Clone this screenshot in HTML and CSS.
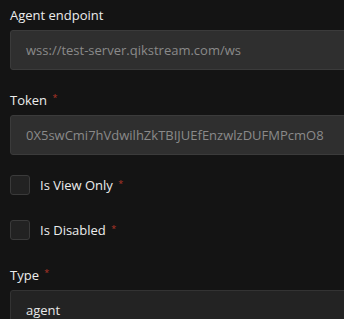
FILE: index.html
```html
<!DOCTYPE html>
<html>
<head>
<meta charset="utf-8">
<link rel="stylesheet" href="styles.css">
</head>
<body>
<form class="form">
  <div class="group">
    <label class="label">Agent endpoint</label>
    <div class="input input-disabled">wss://test-server.qikstream.com/ws</div>
  </div>
  <div class="group">
    <label class="label">Token <span class="req">*</span></label>
    <div class="input input-disabled">0X5swCmi7hVdwilhZkTBIJUEfEnzwlzDUFMPcmO8</div>
  </div>
  <div class="check-row">
    <span class="checkbox"></span>
    <span class="check-label">Is View Only <span class="req">*</span></span>
  </div>
  <div class="check-row">
    <span class="checkbox"></span>
    <span class="check-label">Is Disabled <span class="req">*</span></span>
  </div>
  <div class="group">
    <label class="label">Type <span class="req">*</span></label>
    <div class="input input-select">agent</div>
  </div>
</form>
</body>
</html>
```

FILE: styles.css
```css
html, body {
  margin: 0;
  padding: 0;
  background: #141414;
  overflow: hidden;
}
.form {
  display: flex;
  flex-direction: column;
  padding: 5px 0 0 10px;
  width: 400px;
  font-family: "Open Sans", "Noto Sans", sans-serif;
  color: #e8e8e8;
}
.group {
  display: flex;
  flex-direction: column;
  margin-bottom: 20px;
}
.label {
  font-size: 13px;
  line-height: 20px;
  margin-bottom: 5px;
  color: #ececec;
}
.req {
  color: #b03428;
  font-size: 9px;
  vertical-align: top;
  position: relative;
  top: -2px;
  margin-left: 2px;
}
.input {
  height: 40px;
  box-sizing: border-box;
  border: 1px solid #3b3b3b;
  border-radius: 3px;
  padding: 0 15px;
  display: flex;
  align-items: center;
  font-size: 13px;
}
.input-disabled {
  background: #2f2f2f;
  color: #8a8a8a;
}
.input-select {
  background: #232323;
  border-color: #333333;
  color: #e8e8e8;
}
.check-row {
  display: flex;
  align-items: center;
  height: 20px;
  margin-bottom: 25px;
}
.checkbox {
  width: 20px;
  height: 20px;
  box-sizing: border-box;
  background: #222222;
  border: 1px solid #3a3a3a;
  border-radius: 3px;
  margin-right: 10px;
}
.check-label {
  font-size: 13px;
  line-height: 20px;
  color: #ececec;
}
.check-label .req {
  top: -1px;
}
```
